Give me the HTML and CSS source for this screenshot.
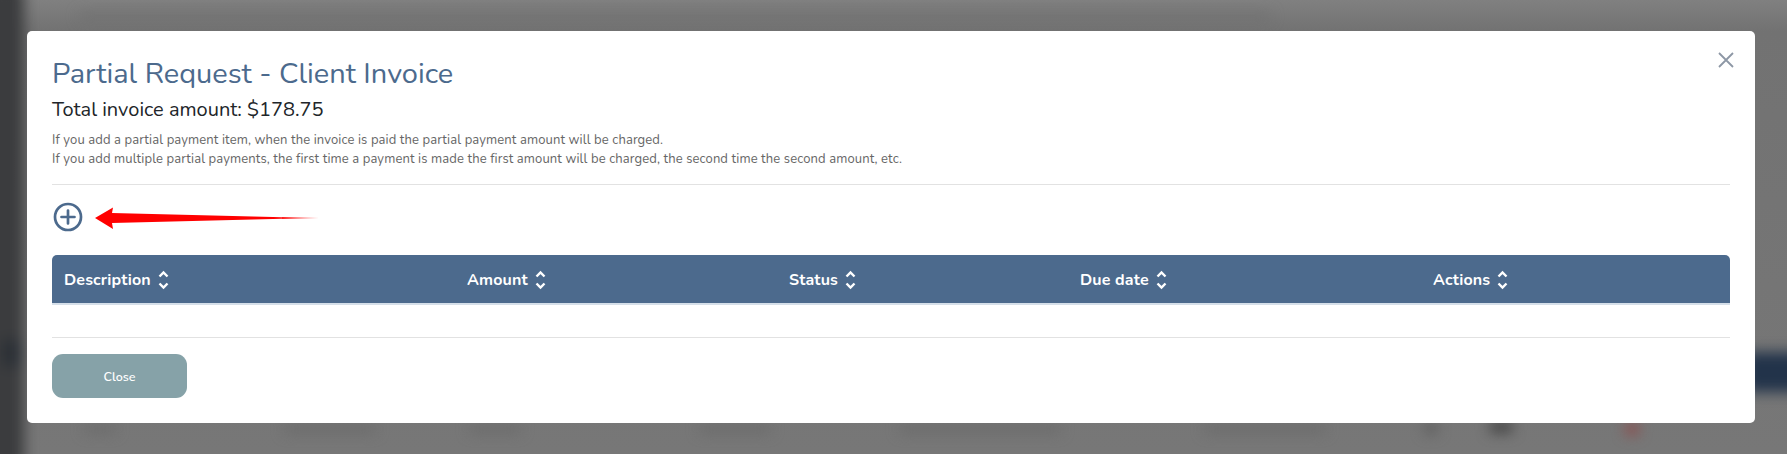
FILE: index.html
```html
<!DOCTYPE html>
<html lang="en">
<head>
<meta charset="utf-8">
<title>Partial Request - Client Invoice</title>
<link rel="stylesheet" href="styles.css">
</head>
<body>
<div class="backdrop" aria-hidden="true">
  <div class="blur-layer">
    <span class="sidebar"></span>
    <span class="blob side-spot"></span>
    <span class="blob top-line"></span>
    <span class="blob right-btn"></span>
    <span class="blob b1"></span><span class="blob b2"></span><span class="blob b3"></span><span class="blob b4"></span>
    <span class="blob b5"></span><span class="blob b6"></span><span class="blob b7"></span><span class="blob b8"></span>
    <span class="blob b9"></span>
  </div>
</div>
<main class="modal">
  <button class="close-x" aria-label="Close">
    <svg width="16" height="16" viewBox="0 0 16 16"><path d="M1 1 15 15M15 1 1 15" fill="none" stroke="#8d97a5" stroke-width="1.8"/></svg>
  </button>
  <h1 class="title">Partial Request - Client Invoice</h1>
  <h2 class="total">Total invoice amount: $178.75</h2>
  <p class="note">If you add a partial payment item, when the invoice is paid the partial payment amount will be charged.<br>If you add multiple partial payments, the first time a payment is made the first amount will be charged, the second time the second amount, etc.</p>
  <hr class="rule rule-top">
  <div class="add-row">
    <svg class="plus" width="30" height="30" viewBox="0 0 30 30"><circle cx="15" cy="15" r="13" fill="none" stroke="#4c6a8d" stroke-width="2.7"/><path d="M8.5 15h13M15 8.5v13" fill="none" stroke="#4c6a8d" stroke-width="2.7" stroke-linecap="round"/></svg>
    <svg class="arrow" width="224" height="24" viewBox="0 0 224 24"><defs><linearGradient id="fade" x1="0" x2="1"><stop offset="0" stop-color="#f00"/><stop offset=".8" stop-color="#f00"/><stop offset="1" stop-color="#f77"/></linearGradient></defs><path d="M0 12 18 1.500 17 7 224 12 17 17 18 23Z" fill="url(#fade)"/></svg>
  </div>
  <div class="thead">
    <div class="th th-desc">Description<svg class="sort" width="11" height="20" viewBox="0 0 11 20"><path d="M1.500 6.500 5.500 2.500l4 4M1.500 13.500l4 4 4-4" fill="none" stroke="#fff" stroke-width="2.400"/></svg></div>
    <div class="th th-amount">Amount<svg class="sort" width="11" height="20" viewBox="0 0 11 20"><path d="M1.500 6.500 5.500 2.500l4 4M1.500 13.500l4 4 4-4" fill="none" stroke="#fff" stroke-width="2.400"/></svg></div>
    <div class="th th-status">Status<svg class="sort" width="11" height="20" viewBox="0 0 11 20"><path d="M1.500 6.500 5.500 2.500l4 4M1.500 13.500l4 4 4-4" fill="none" stroke="#fff" stroke-width="2.400"/></svg></div>
    <div class="th th-due">Due date<svg class="sort" width="11" height="20" viewBox="0 0 11 20"><path d="M1.500 6.500 5.500 2.500l4 4M1.500 13.500l4 4 4-4" fill="none" stroke="#fff" stroke-width="2.400"/></svg></div>
    <div class="th th-actions">Actions<svg class="sort" width="11" height="20" viewBox="0 0 11 20"><path d="M1.500 6.500 5.500 2.500l4 4M1.500 13.500l4 4 4-4" fill="none" stroke="#fff" stroke-width="2.400"/></svg></div>
  </div>
  <hr class="rule rule-bottom">
  <button class="close-btn">Close</button>
</main>
</body>
</html>
```
FILE: styles.css
```css
* { box-sizing: border-box; }
html, body { margin: 0; height: 454px; overflow: hidden; }
body { background: #777; font-family: "Nunito", "Lato", "Open Sans", sans-serif; padding: 31px 32px 0 27px; }

.backdrop { position: absolute; inset: 0; overflow: hidden; background: linear-gradient(#808080, #727272 31px, #777 100%); }
.blur-layer { position: absolute; inset: 0; filter: blur(7px); }
.blob { position: absolute; display: block; background: #666; }
.sidebar { position: absolute; left: -14px; top: -14px; bottom: -14px; width: 38px; background: #3b3c3e; }
.side-spot { left: 2px; top: 340px; width: 20px; height: 26px; background: #2b3036; }
.top-line { left: 80px; top: 14px; width: 1190px; height: 5px; background: #6c6c6c; }
.right-btn { left: 1745px; top: 352px; width: 60px; height: 40px; background: #22334a; }
.b1 { left: 85px; top: 426px; width: 30px; height: 6px; }
.b2 { left: 285px; top: 426px; width: 90px; height: 6px; }
.b3 { left: 470px; top: 426px; width: 50px; height: 6px; }
.b4 { left: 700px; top: 426px; width: 70px; height: 6px; }
.b5 { left: 900px; top: 426px; width: 160px; height: 6px; }
.b6 { left: 1205px; top: 426px; width: 120px; height: 6px; }
.b7 { left: 1425px; top: 424px; width: 12px; height: 9px; background: #555; }
.b8 { left: 1490px; top: 422px; width: 22px; height: 10px; background: #3a3a3a; }
.b9 { left: 1626px; top: 424px; width: 12px; height: 10px; background: #93403f; }

.modal { position: relative; width: 1728px; height: 392px; background: #fff; border-radius: 5px; padding: 25px 25px 0; color: #212529; }

.close-x { position: absolute; right: 21px; top: 21px; width: 16px; height: 16px; padding: 0; border: 0; background: none; display: flex; }

.title { margin: 0; font-size: 29px; line-height: 36px; font-weight: 400; color: #4c6a8d; }
.total { margin: 4px 0 0; font-size: 20px; line-height: 27px; font-weight: 400; color: #212529; }
.note { margin: 8px 0 0; font-size: 13px; line-height: 19px; color: #666; letter-spacing: .11px; }

.rule { margin: 0; border: 0; border-top: 1px solid #e2e2e2; }
.rule-top { margin-top: 15px; }

.add-row { display: flex; align-items: center; height: 30px; margin-top: 17px; padding-left: 1px; }
.arrow { margin-left: 12px; margin-top: 2px; }

.thead { display: flex; align-items: center; height: 50px; margin-top: 23px; padding-top: 1px; background: #4c6a8d; border-bottom: 2px solid #d5dfe9; border-radius: 5px 5px 0 0; padding-left: 12px; }
.th { display: flex; align-items: center; gap: 7px; color: #fff; font-size: 16px; font-weight: 700; letter-spacing: .15px; }
.th-desc { width: 403px; }
.th-amount { width: 322px; }
.th-status { width: 291px; }
.th-due { width: 353px; }
.sort { display: block; }

.rule-bottom { margin-top: 32px; }

.close-btn { display: block; width: 135px; height: 44px; margin-top: 16px; border: 0; border-radius: 11px; background: #86a2a8; color: #fff; font: 600 12.5px "Nunito", "Lato", sans-serif; }
```
